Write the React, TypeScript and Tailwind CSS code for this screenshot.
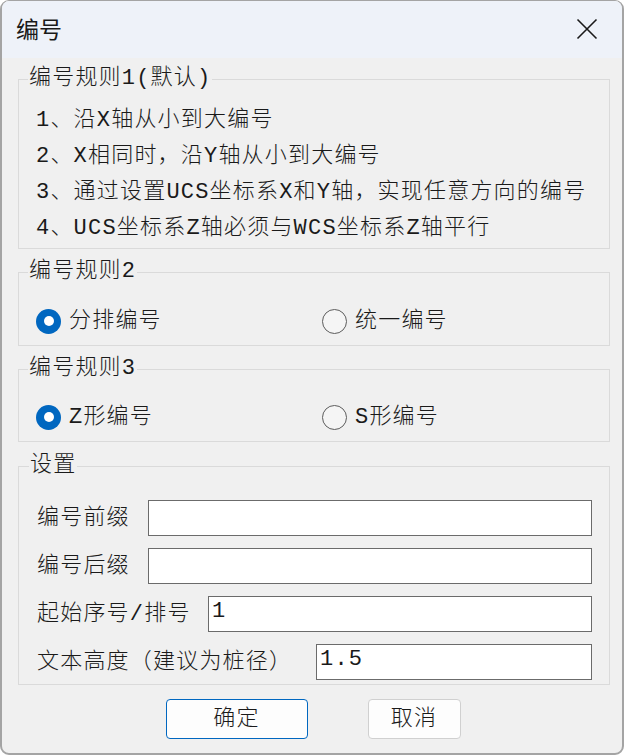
const FONT = { fontFamily: '"Liberation Mono", "Noto Sans CJK SC", monospace' };

const RULES = [
  "1、沿X轴从小到大编号",
  "2、X相同时，沿Y轴从小到大编号",
  "3、通过设置UCS坐标系X和Y轴，实现任意方向的编号",
  "4、UCS坐标系Z轴必须与WCS坐标系Z轴平行",
];

function Radio({ checked, label }: { checked?: boolean; label: string }) {
  return (
    <div className="flex items-center gap-[8px]">
      {checked ? (
        <div className="w-[25px] h-[25px] rounded-full bg-[#0067c0] flex items-center justify-center shrink-0">
          <div className="w-[10px] h-[10px] rounded-full bg-white" />
        </div>
      ) : (
        <div className="w-[25px] h-[25px] rounded-full border-[1.5px] border-[#5c5c5c] bg-[#f5f5f5] shrink-0" />
      )}
      <span>{label}</span>
    </div>
  );
}

function Group({ title, children, className }: { title: string; children: React.ReactNode; className?: string }) {
  return (
    <fieldset className={`border border-[#dadada] mx-0 min-w-0 ${className ?? ""}`}>
      <legend className="ml-[-8px] px-[1px] leading-[24px]">{title}</legend>
      {children}
    </fieldset>
  );
}

function Field({ label, width, value }: { label: string; width: string; value?: string }) {
  return (
    <div className="flex items-center">
      <span className={`${width} shrink-0`}>{label}</span>
      <input
        readOnly
        size={1}
        defaultValue={value ?? ""}
        className="flex-1 min-w-0 w-0 h-[36px] border border-[#6b6b6b] bg-white px-[3px] pb-[6px] text-[22px] font-light text-[#1a1a1a] outline-none"
        style={FONT}
      />
    </div>
  );
}

export default function App() {
  return (
    <div className="w-[624px] h-[755px] bg-[#f0f0f0] text-[#1a1a1a] text-[22px] font-light tracking-[1.2px] border-x-2 border-b-2 border-t border-[#a4a4a4] rounded-[9px] overflow-hidden flex flex-col" style={FONT}>
      {/* Title bar */}
      <div className="h-[57px] shrink-0 bg-[#eef2f9] flex items-center justify-between pl-[14px] pr-[24px]">
        <span className="text-[23px] font-normal tracking-normal pb-[2px]" style={{ fontFamily: '"Noto Sans CJK SC", sans-serif' }}>编号</span>
        <svg width="22" height="22" viewBox="0 0 22 22" className="mb-[1px]">
          <path d="M1.5 1.5L20.5 20.5M20.5 1.5L1.5 20.5" stroke="#1a1a1a" strokeWidth="1.6" />
        </svg>
      </div>

      <div className="flex-1 pl-[16px] pr-[12px] pt-[9px] flex flex-col">
        <Group title="编号规则1(默认)" className="pl-[17px] pt-[12px] pb-[1px]">
          {RULES.map(r => (
            <div key={r} className="leading-[36px]">{r}</div>
          ))}
        </Group>

        <Group title="编号规则2" className="mt-[11px] pl-[17px] pt-[19px] pb-[6px]">
          <div className="flex items-center h-[36px]">
            <div className="w-[286px]"><Radio checked label="分排编号" /></div>
            <Radio label="统一编号" />
          </div>
        </Group>

        <Group title="编号规则3" className="mt-[11px] pl-[17px] pt-[18px] pb-[6px]">
          <div className="flex items-center h-[36px]">
            <div className="w-[286px]"><Radio checked label="Z形编号" /></div>
            <Radio label="S形编号" />
          </div>
        </Group>

        <Group title="设置" className="mt-[12px] pl-[18px] pr-[17px] pt-[22px] pb-[4px]">
          <div className="flex flex-col gap-[12px]">
            <Field label="编号前缀" width="w-[111px]" />
            <Field label="编号后缀" width="w-[111px]" />
            <Field label="起始序号/排号" width="w-[171px]" value="1" />
            <Field label="文本高度（建议为桩径）" width="w-[279px]" value="1.5" />
          </div>
        </Group>

        <div className="flex justify-center gap-[60px] mt-[14px] pr-[2px]">
          <button className="w-[142px] h-[40px] rounded-[4px] border border-[#0067c0] bg-[#fdfdfd]">确定</button>
          <button className="w-[93px] h-[40px] rounded-[4px] border border-[#d0d0d0] bg-[#fdfdfd]">取消</button>
        </div>
      </div>
    </div>
  );
}
